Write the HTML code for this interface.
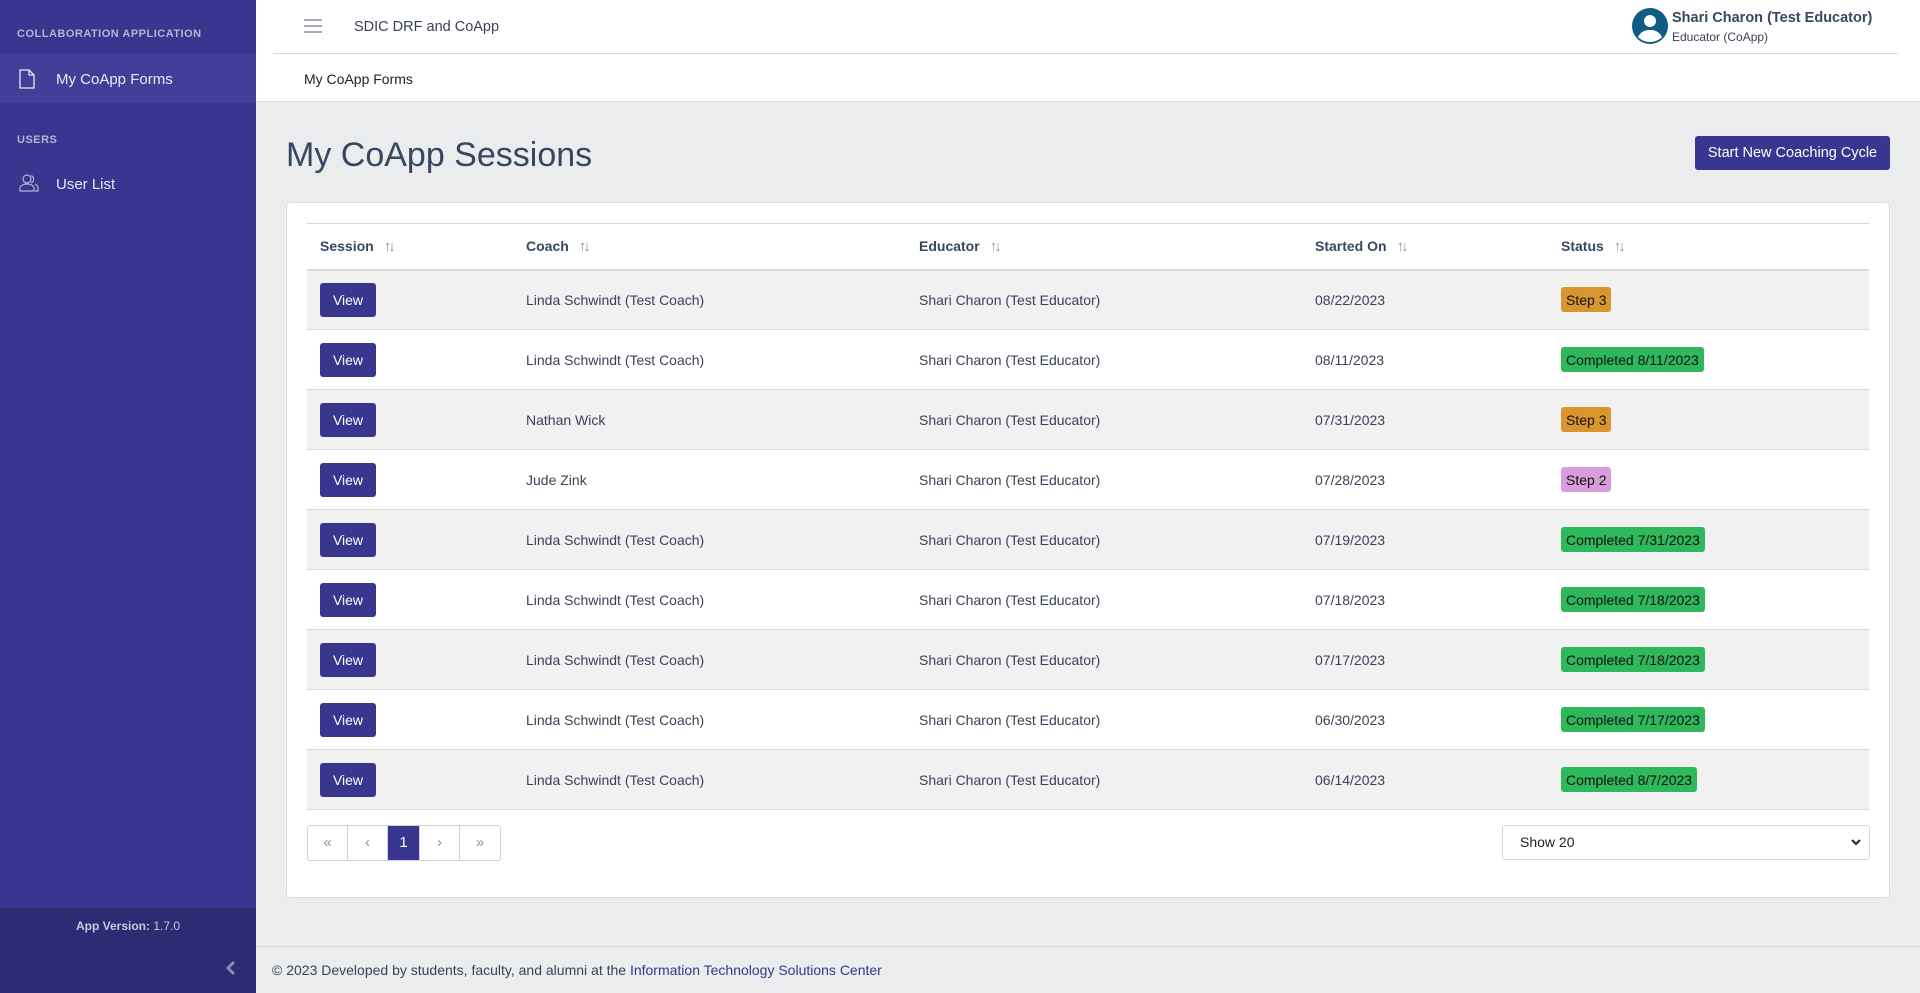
<!DOCTYPE html>
<html><head><meta charset="utf-8"><style>
*{box-sizing:border-box;margin:0;padding:0}
body{width:1920px;height:993px;overflow:hidden;font-family:"Liberation Sans",sans-serif;background:#ebecee;color:#3a4256;position:relative}
.sb{position:absolute;left:0;top:0;width:256px;height:993px;background:#38368f}
.sb .h{position:absolute;left:17px;font-size:11px;font-weight:bold;color:#b4b4d4;letter-spacing:.5px}
.sb .it{position:absolute;left:0;width:256px;height:49px;color:#e8e8f4;font-size:15px;line-height:51px;padding-left:56px}
.sb .act{background:#433f98}
.sb .ico{position:absolute;left:19px;top:15px}
.sbf{position:absolute;left:0;top:908px;width:256px;height:85px;background:#2d2b74}
.top{position:absolute;left:256px;top:0;right:0;height:102px;background:#fff;border-bottom:1px solid #d6d8dc}
.line{position:absolute;left:273px;top:53px;width:1625px;height:1px;background:#d6d8dc}
.title{position:absolute;left:286px;top:136px;font-size:34px;color:#384761}
.btn{position:absolute;left:1695px;top:136px;width:195px;height:34px;background:#38368f;color:#fff;border-radius:3px;font-size:14.5px;text-align:center;line-height:35px}
.card{position:absolute;left:286px;top:202px;width:1604px;height:696px;background:#fff;border:1px solid #dadce0;border-radius:4px}
table{position:absolute;left:20px;top:20px;width:1562px;border-collapse:collapse;font-size:14px}
th{text-align:left;height:46px;font-weight:bold;border-top:1px solid #d6d8dc;border-bottom:2px solid #d6d8dc;color:#384761;font-size:14px}
td{height:60px;border-bottom:1px solid #d6d8dc}
tbody tr:nth-child(odd) td{background:#f1f1f2}
th:first-child,td:first-child{padding-left:13px}
.v{display:inline-block;width:56px;height:34px;background:#38368f;color:#fff;border-radius:3px;text-align:center;line-height:34px;font-size:14px}
.b{display:inline-block;padding:0 5px;height:25px;line-height:26px;border-radius:3px;color:#111;font-size:14px;vertical-align:middle}
.o{background:#d9962f}.g{background:#2eb85c}.p{background:#d99cdc}
.s{color:#8a92a6;font-weight:bold;margin-left:10px;letter-spacing:-3px;font-size:15px}
.pg{position:absolute;left:20px;top:622px;display:flex;border:1px solid #cfd3d8;border-radius:3px;height:36px}
.pg div{width:40px;text-align:center;line-height:34px;color:#8a92a6;border-right:1px solid #cfd3d8;font-size:15px}
.pg div:last-child{border-right:0}
.pg .a{background:#38368f;color:#fff;width:32px}
.sel{position:absolute;left:1215px;top:622px;width:368px;height:35px;border:1px solid #d6d8dc;border-radius:3px;font-size:14px;line-height:33px;padding-left:17px;color:#222}
.ft{position:absolute;left:256px;top:946px;right:0;height:47px;border-top:1px solid #d6d8dc;font-size:14px;line-height:46px;padding-left:16px;color:#3a4256}
</style></head><body>
<div class="sb">
<div class="h" style="top:28px">COLLABORATION APPLICATION</div>
<div class="it act" style="top:54px"><svg class="ico" width="16" height="20" viewBox="0 0 16 20" fill="none" stroke="#e8e8f4" stroke-width="1.3"><path d="M1 1h9l5 5v13H1z M10 1v5h5"/></svg>My CoApp Forms</div>
<div class="h" style="top:134px">USERS</div>
<div class="it" style="top:159px"><svg class="ico" width="20" height="18" viewBox="0 0 20 18" fill="none" stroke="#b4b4d4" stroke-width="1.2"><circle cx="8" cy="5" r="4"/><path d="M1 17v-3c0-2 3-4 7-4s7 2 7 4v3z M12 1.5a4 4 0 0 1 0 7.5 M16 10c2 1 3 2 3 4v3h-3"/></svg>User List</div>
<div class="sbf"><div style="position:absolute;top:11px;width:256px;text-align:center;font-size:12px;color:#c8c8e0"><b>App Version:</b> 1.7.0</div>
<svg style="position:absolute;left:226px;top:52px" width="10" height="16" viewBox="0 0 10 16"><path d="M8 2L2 8l6 6" stroke="#8a8fb0" stroke-width="3" fill="none"/></svg></div>
</div>
<div class="top">
<svg style="position:absolute;left:48px;top:19px" width="18" height="14"><path d="M0 1h18M0 7h18M0 13h18" stroke="#8a8f9c" stroke-width="1.5"/></svg>
<div style="position:absolute;left:98px;top:19px;font-size:14.5px;color:#3a4256">SDIC DRF and CoApp</div>
<div style="position:absolute;left:48px;top:71px;font-size:14px;color:#222">My CoApp Forms</div>
<svg style="position:absolute;left:1376px;top:8px" width="36" height="36" viewBox="0 0 36 36"><circle cx="18" cy="18" r="18" fill="#0f5c85"/><circle cx="18" cy="13" r="6" fill="#fff"/><path d="M6 29c3-6 8-7 12-7s9 1 12 7c-3 3-7 5-12 5s-9-2-12-5z" fill="#fff"/></svg>
<div style="position:absolute;left:1416px;top:10px;font-size:14.5px;font-weight:bold;color:#384761">Shari Charon (Test Educator)</div>
<div style="position:absolute;left:1416px;top:30px;font-size:12px;color:#3a4256">Educator (CoApp)</div>
</div>
<div class="line"></div>
<div class="title">My CoApp Sessions</div>
<div class="btn">Start New Coaching Cycle</div>
<div class="card">
<table>
<thead><tr><th style="width:219px">Session<span class="s">↑↓</span></th><th style="width:393px">Coach<span class="s">↑↓</span></th><th style="width:396px">Educator<span class="s">↑↓</span></th><th style="width:246px">Started On<span class="s">↑↓</span></th><th>Status<span class="s">↑↓</span></th></tr></thead>
<tbody>
<tr><td><span class="v">View</span></td><td>Linda Schwindt (Test Coach)</td><td>Shari Charon (Test Educator)</td><td>08/22/2023</td><td><span class="b o">Step 3</span></td></tr>
<tr><td><span class="v">View</span></td><td>Linda Schwindt (Test Coach)</td><td>Shari Charon (Test Educator)</td><td>08/11/2023</td><td><span class="b g">Completed 8/11/2023</span></td></tr>
<tr><td><span class="v">View</span></td><td>Nathan Wick</td><td>Shari Charon (Test Educator)</td><td>07/31/2023</td><td><span class="b o">Step 3</span></td></tr>
<tr><td><span class="v">View</span></td><td>Jude Zink</td><td>Shari Charon (Test Educator)</td><td>07/28/2023</td><td><span class="b p">Step 2</span></td></tr>
<tr><td><span class="v">View</span></td><td>Linda Schwindt (Test Coach)</td><td>Shari Charon (Test Educator)</td><td>07/19/2023</td><td><span class="b g">Completed 7/31/2023</span></td></tr>
<tr><td><span class="v">View</span></td><td>Linda Schwindt (Test Coach)</td><td>Shari Charon (Test Educator)</td><td>07/18/2023</td><td><span class="b g">Completed 7/18/2023</span></td></tr>
<tr><td><span class="v">View</span></td><td>Linda Schwindt (Test Coach)</td><td>Shari Charon (Test Educator)</td><td>07/17/2023</td><td><span class="b g">Completed 7/18/2023</span></td></tr>
<tr><td><span class="v">View</span></td><td>Linda Schwindt (Test Coach)</td><td>Shari Charon (Test Educator)</td><td>06/30/2023</td><td><span class="b g">Completed 7/17/2023</span></td></tr>
<tr><td><span class="v">View</span></td><td>Linda Schwindt (Test Coach)</td><td>Shari Charon (Test Educator)</td><td>06/14/2023</td><td><span class="b g">Completed 8/7/2023</span></td></tr>
</tbody>
</table>
<div class="pg"><div>«</div><div>‹</div><div class="a">1</div><div>›</div><div>»</div></div>
<div class="sel">Show 20<svg style="position:absolute;right:8px;top:13px" width="10" height="7"><path d="M1 1l4 4 4-4" stroke="#222" stroke-width="2" fill="none"/></svg></div>
</div>
<div class="ft">© 2023 Developed by students, faculty, and alumni at the <span style="color:#38368f">Information Technology Solutions Center</span></div>
</body></html>
